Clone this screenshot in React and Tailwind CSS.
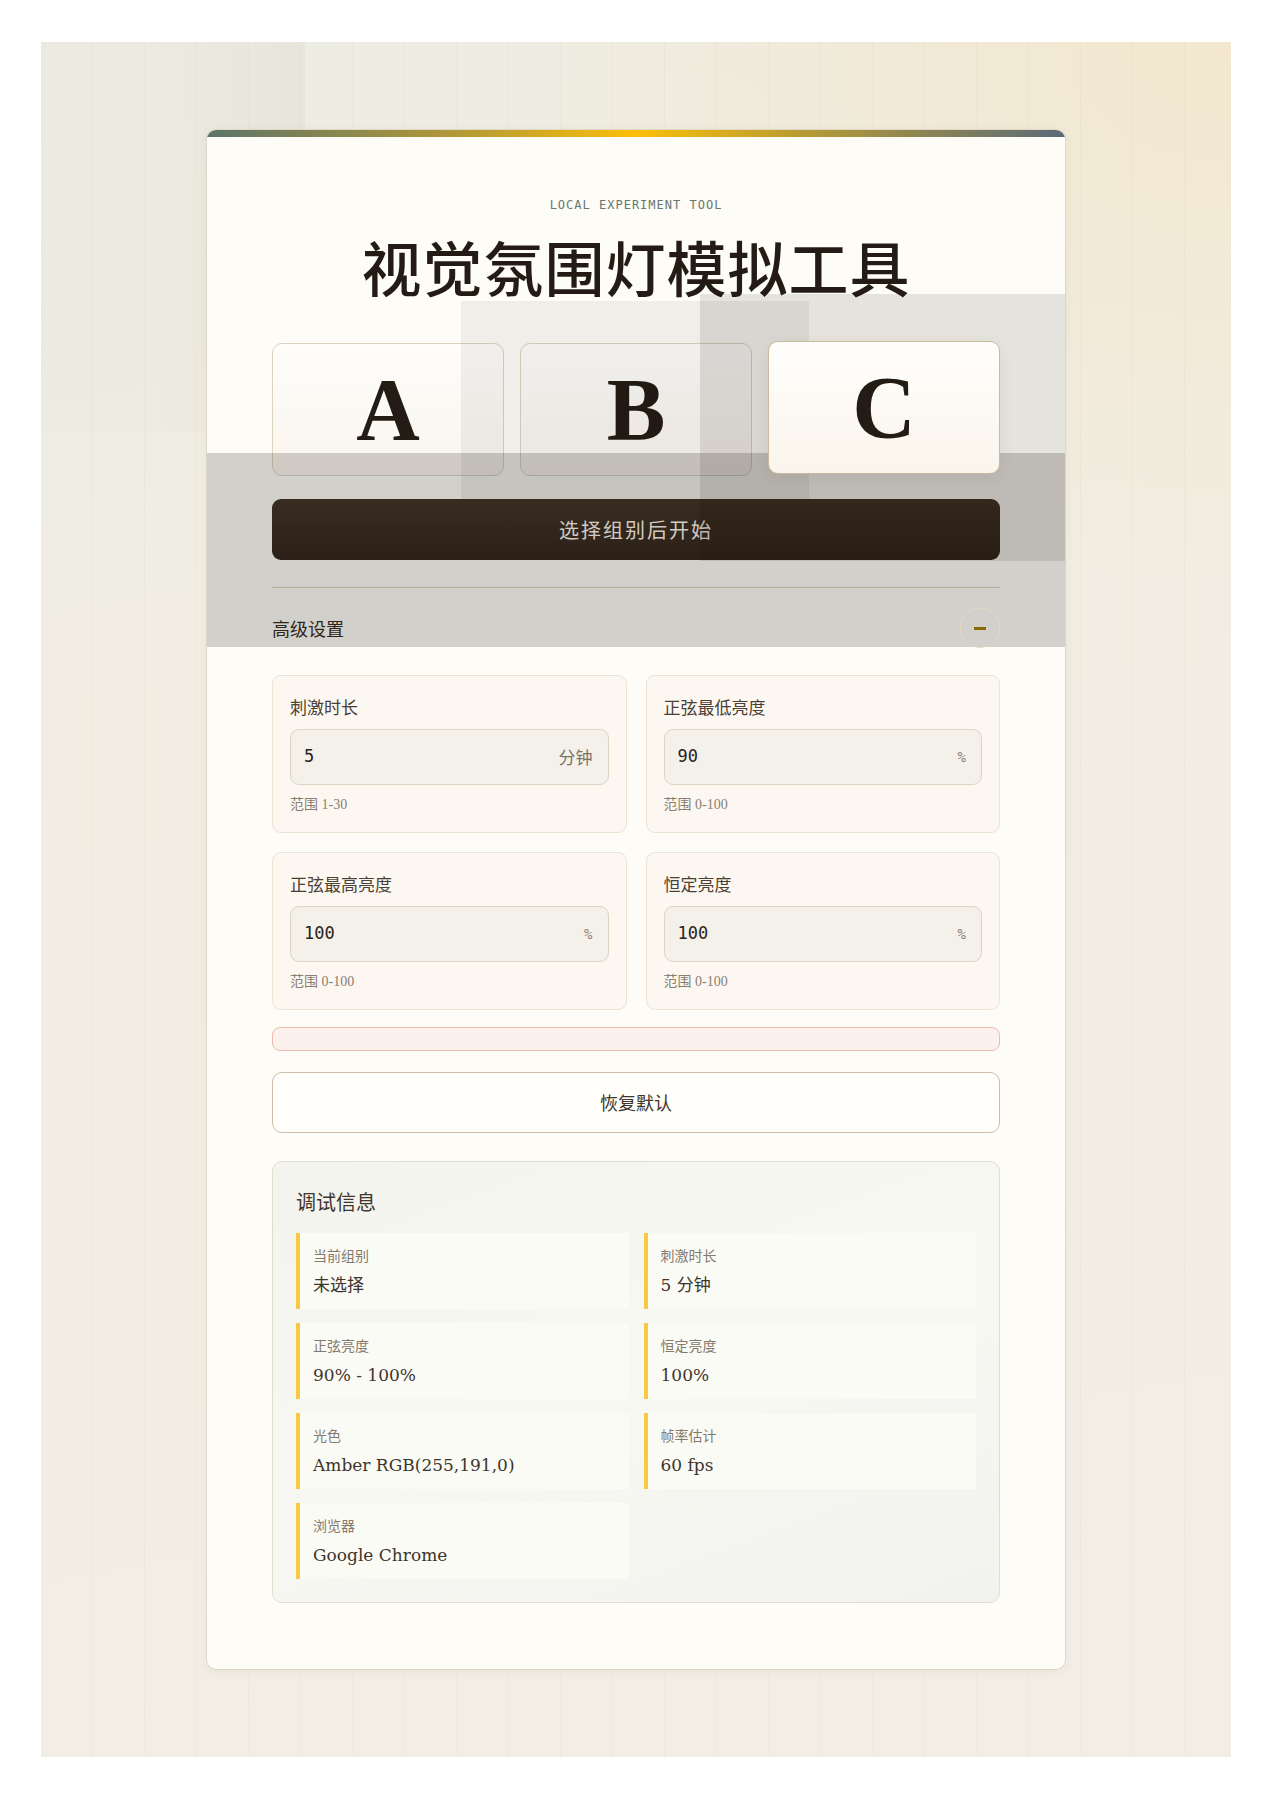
import { useState } from "react";

const serif = "font-['Liberation_Serif','Noto_Sans_CJK_SC',serif]";
const wideSerif = "font-['DejaVu_Serif','Noto_Sans_CJK_SC',serif]";
const mono = "font-['DejaVu_Sans_Mono','Liberation_Mono',monospace]";

const settings = [
  { label: "刺激时长", value: "5", unit: "分钟", hint: "范围 1-30" },
  { label: "正弦最低亮度", value: "90", unit: "%", hint: "范围 0-100" },
  { label: "正弦最高亮度", value: "100", unit: "%", hint: "范围 0-100" },
  { label: "恒定亮度", value: "100", unit: "%", hint: "范围 0-100" },
];

const debugItems = [
  { label: "当前组别", value: "未选择" },
  { label: "刺激时长", value: "5 分钟" },
  { label: "正弦亮度", value: "90% - 100%" },
  { label: "恒定亮度", value: "100%" },
  { label: "光色", value: "Amber RGB(255,191,0)" },
  { label: "帧率估计", value: "60 fps" },
  { label: "浏览器", value: "Google Chrome" },
];

function GroupCard({ letter, selected, onClick }) {
  return (
    <button
      onClick={onClick}
      className={
        selected
          ? "relative z-20 h-[133px] -translate-y-[2px] rounded-[10px] border border-[#cbbb9c] bg-[linear-gradient(180deg,#fffefc,#faf5ec)] shadow-[0_4px_14px_rgba(80,60,20,0.08)] flex items-center justify-center"
          : "h-[133px] rounded-[10px] border border-[#ddd2c0] bg-[linear-gradient(180deg,#fefdfa,#f9f5ee)] flex items-center justify-center"
      }
    >
      <span className={`${serif} text-[88px] font-bold leading-none text-[#231c15]`}>{letter}</span>
    </button>
  );
}

export default function App() {
  const [group, setGroup] = useState("C");
  const [open, setOpen] = useState(true);

  return (
    <div className="bg-white px-[41px] py-[42px]">
      <div className="relative flex justify-center pt-[87px] pb-[87px] bg-[linear-gradient(170deg,#edece3_0%,#f1ede2_35%,#f2eee6_100%)]">
        {/* warm corner, faint vertical stripes, left glow block */}
        <div className="absolute inset-0 bg-[radial-gradient(ellipse_90%_45%_at_100%_0%,rgba(247,228,190,0.55),transparent_70%)]" />
        <div className="absolute inset-0 bg-[repeating-linear-gradient(90deg,transparent_0px,transparent_51px,rgba(150,130,90,0.045)_51px,rgba(150,130,90,0.045)_52px)]" />
        <div className="absolute left-0 top-0 w-[264px] h-[391px] bg-[linear-gradient(90deg,rgba(225,222,210,0.12)_0%,rgba(225,222,210,0.12)_45%,rgba(150,140,120,0.07)_100%)]" />

        <div className="relative w-[860px] overflow-hidden rounded-[10px] border border-[#dfd6c6] bg-[#fdfcf7] shadow-[0_2px_10px_rgba(80,60,20,0.05)]">
          <div className="h-[7px] bg-[linear-gradient(90deg,#5c7469,#b59a35_30%,#fbbf0a_50%,#b59a35_70%,#5a6a79)]" />

          {/* translucent layers that sit over the content */}
          <div className="absolute left-0 right-0 top-[323px] h-[194px] z-10 bg-[rgba(10,8,0,0.175)]" />
          <div className="absolute left-[254px] top-[171px] w-[348px] h-[198px] z-10 bg-[rgba(0,0,0,0.055)]" />
          <div className="absolute left-[493px] right-0 top-[164px] h-[267px] z-10 bg-[rgba(20,10,0,0.1)]" />

          <div className="px-[65px] pt-[60px] pb-[66px]">
            <p className={`${mono} text-center text-[12px] leading-4 tracking-[1px] text-[#66786d]`}>
              LOCAL EXPERIMENT TOOL
            </p>
            <h1 className="mt-[17px] text-center font-['Noto_Sans_CJK_SC',serif] text-[60px] font-medium leading-[72px] tracking-[1px] text-[#241c14]">
              视觉氛围灯模拟工具
            </h1>

            <div className="mt-[41px] grid grid-cols-3 gap-4">
              {["A", "B", "C"].map((g) => (
                <GroupCard key={g} letter={g} selected={group === g} onClick={() => setGroup(g)} />
              ))}
            </div>

            <button className="mt-[23px] flex h-[61px] w-full items-center justify-center rounded-[9px] bg-[linear-gradient(180deg,#433428,#33271d)] font-['Noto_Sans_CJK_SC',serif] text-[20px] tracking-[2px] text-[#fbf6ec]">
              选择组别后开始
            </button>

            <div className="mt-[27px] border-t border-[#dccfb6]" />

            <div className="mt-[20px] flex h-10 items-center justify-between">
              <span className="font-['Noto_Sans_CJK_SC',serif] text-[18px] text-[#352c23]">高级设置</span>
              <button
                onClick={() => setOpen(!open)}
                className="relative z-20 flex h-10 w-10 items-center justify-center rounded-full border border-[#e2d8c6]"
              >
                <span className="block h-[3px] w-3 bg-[#8a6a03]" />
              </button>
            </div>

            {open && (
              <div className="mt-[27px] grid grid-cols-2 gap-[19px]">
                {settings.map((s) => (
                  <div key={s.label} className="rounded-[9px] border border-[#ede3d3] bg-[#fcf8f1] px-[17px] pt-[18px] pb-[17px]">
                    <p className="font-['Noto_Sans_CJK_SC',serif] text-[17px] leading-[26px] text-[#4a4036]">{s.label}</p>
                    <div className="mt-[9px] flex h-[56px] items-center justify-between rounded-[9px] border border-[#ddd3c2] bg-[#f3f1ea] pl-[13px] pr-[15px]">
                      <span className={`${mono} text-[17px] text-[#2a231b]`}>{s.value}</span>
                      {s.unit === "%" ? (
                        <span className={`${mono} text-[14px] text-[#8d8376]`}>%</span>
                      ) : (
                        <span className="font-['Noto_Sans_CJK_SC',serif] text-[17px] text-[#7d7266]">{s.unit}</span>
                      )}
                    </div>
                    <p className={`${serif} mt-[10px] text-[14px] leading-5 text-[#8a7f73]`}>{s.hint}</p>
                  </div>
                ))}
              </div>
            )}

            <div className="mt-[17px] h-[24px] rounded-[8px] border border-[#f1b9b0] bg-[#fdf1ed]" />

            <button className="mt-[21px] flex h-[61px] w-full items-center justify-center rounded-[10px] border border-[#cbbda7] bg-[#fffefa] font-['Noto_Sans_CJK_SC',serif] text-[18px] text-[#3e352c]">
              恢复默认
            </button>

            <div className="mt-[28px] rounded-[10px] border border-[#e4dccd] bg-[linear-gradient(160deg,#f4f4ef,#f8f8f3_50%,#f2f3ee)] px-[23px] pt-[26px] pb-[23px]">
              <h2 className="font-['Noto_Sans_CJK_SC',serif] text-[20px] leading-7 text-[#3e352c]">调试信息</h2>
              <div className="mt-[17px] grid grid-cols-2 gap-x-[15px] gap-y-[14px]">
                {debugItems.map((d) => (
                  <div key={d.label} className="h-[76px] border-l-4 border-[#f8c944] bg-[#fbfbf6] pl-[13px] pt-[12px]">
                    <p className="font-['Noto_Sans_CJK_SC',serif] text-[14px] leading-5 text-[#85796c]">{d.label}</p>
                    <p className={`${wideSerif} mt-[8px] text-[17px] leading-6 text-[#3e352c]`}>{d.value}</p>
                  </div>
                ))}
              </div>
            </div>
          </div>
        </div>
      </div>
    </div>
  );
}
